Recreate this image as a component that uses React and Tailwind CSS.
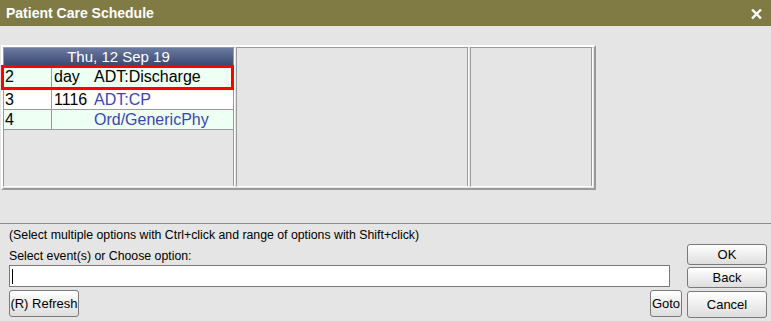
import React from "react";

const btn =
  "flex items-center justify-center border border-[#7a7a7a] rounded-[3px] bg-gradient-to-b from-white to-[#dedede] text-[13px] text-black leading-none whitespace-nowrap";

function Row({ num, code, label, labelClass, bg, selected }) {
  return (
    <div
      className={`relative flex ${selected ? "h-[25px]" : "h-[20px]"} ${bg} border-b border-[#9a9a9a]`}
    >
      <div className="w-[48px] border-r border-[#9a9a9a] pl-[1px] flex items-center text-[16px] text-black">
        {num}
      </div>
      <div className="flex-1 flex items-center pl-[2px] text-[16px] whitespace-nowrap">
        <span className="w-[40px] text-black">{code}</span>
        <span className={labelClass}>{label}</span>
      </div>
      {selected && (
        <div className="absolute left-[-3px] right-[-1px] top-0 bottom-[-1px] border-[3px] border-[#ff0000] pointer-events-none" />
      )}
    </div>
  );
}

export default function App() {
  return (
    <div
      className="w-[771px] h-[321px] bg-[#e5e5e5] flex flex-col overflow-hidden"
      style={{ fontFamily: '"Liberation Sans", Arial, sans-serif' }}
    >
      {/* Title bar */}
      <div className="h-[26px] bg-[#807a45] flex items-center justify-between pl-[6px] pr-[9px] shrink-0">
        <span className="text-white font-bold text-[14px] leading-none">Patient Care Schedule</span>
        <svg width="11" height="10" viewBox="0 0 11 10" className="mt-[1px]">
          <path d="M1 0.5 L10 9.5 M10 0.5 L1 9.5" stroke="white" strokeWidth="2.4" />
        </svg>
      </div>

      {/* Schedule frame */}
      <div className="mt-[19px] ml-[1px] w-[595px] h-[145px] shrink-0 border-l-2 border-t-2 border-white border-r-2 border-r-[#9a9a9a] border-b-2 border-b-[#9a9a9a] pb-[1px] flex gap-[1px]">
        {/* Panel 1 */}
        <div className="w-[232px] h-full border-l border-t border-[#9a9a9a] border-r border-r-white border-b border-b-white flex flex-col">
          <div className="flex-1 flex flex-col border-r border-[#9a9a9a]">
            <div className="h-[17px] bg-gradient-to-b from-[#6a7aa0] to-[#3c4a73] flex items-center justify-center text-white text-[15px] leading-none">
              Thu, 12 Sep 19
            </div>
            <Row num="2" code="day" label="ADT:Discharge" labelClass="text-black" bg="bg-[#eefff3]" selected />
            <Row num="3" code="1116" label="ADT:CP" labelClass="text-[#3a44b6]" bg="bg-white" />
            <Row num="4" code="" label="Ord/GenericPhy" labelClass="text-[#3a44b6]" bg="bg-[#eefff3]" />
            <div className="flex-1" />
          </div>
        </div>
        {/* Panel 2 */}
        <div className="w-[233px] h-full border-l border-t border-[#9a9a9a] border-r border-r-white border-b border-b-white">
          <div className="h-full border-r border-[#9a9a9a]" />
        </div>
        {/* Panel 3 */}
        <div className="w-[123px] h-full border-l border-t border-[#9a9a9a] border-r border-r-white border-b border-b-white">
          <div className="h-full border-r border-[#9a9a9a]" />
        </div>
      </div>

      {/* Separator */}
      <div className="mt-[33px] h-px bg-[#8c8c8c] shrink-0" />

      {/* Bottom area */}
      <div className="flex flex-1 pl-[9px] pr-[4px]">
        <div className="flex-1 flex flex-col">
          <div className="mt-[4px] h-[15px] text-[12.3px] leading-[15px] text-black whitespace-nowrap">
            (Select multiple options with Ctrl+click and range of options with Shift+click)
          </div>
          <div className="mt-[6px] h-[15px] text-[12.3px] leading-[15px] text-black">
            Select event(s) or Choose option:
          </div>
          <div className="mt-[1px] w-[661px] h-[22px] bg-white border border-[#7a7a7a] flex items-center pl-[2px]">
            <div className="w-px h-[15px] bg-black" />
          </div>
          <div className="mt-[3px] flex justify-between pr-[5px]">
            <div className={`${btn} w-[70px] h-[27px]`}>(R) Refresh</div>
            <div className={`${btn} w-[32px] h-[27px]`}>Goto</div>
          </div>
        </div>
        <div className="w-[80px] flex flex-col pt-[20px]">
          <div className={`${btn} h-[21px]`}>OK</div>
          <div className={`${btn} h-[21px] mt-[2px]`}>Back</div>
          <div className={`${btn} h-[27px] mt-[3px]`}>Cancel</div>
        </div>
      </div>
    </div>
  );
}
